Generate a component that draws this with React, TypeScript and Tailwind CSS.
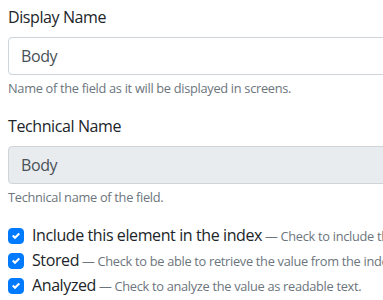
import React from "react";

const CheckIcon = () => (
    <svg viewBox="0 0 8 8" className="w-2 h-2" fill="#fff">
        <path d="M6.564.75l-3.59 3.612-1.538-1.55L0 4.26l2.974 2.99L8 2.193z" />
    </svg>
);

function CheckRow({ label, help }: { label: string; help: string }) {
    return (
        <label className="flex items-start min-h-6 whitespace-nowrap">
            <span className="mt-[5px] w-4 h-4 shrink-0 rounded bg-[#007bff] border border-[#007bff] flex items-center justify-center">
                <CheckIcon />
            </span>
            <span className="ml-2 text-base leading-6 text-[#212529] tracking-[-0.4px]">
                {label}
                <span className="text-[12.8px] text-[#6c757d] tracking-[-0.3px]"> — {help}</span>
            </span>
        </label>
    );
}

export default function App() {
    return (
        <div className="w-[383px] h-[300px] overflow-hidden bg-white" style={{ fontFamily: '"Open Sans", sans-serif' }}>
            <div className="w-[440px] pl-2 pt-[5px]">
                <div className="mb-4">
                    <div className="text-base leading-6 text-[#212529] mb-2 tracking-[-0.4px]">Display Name</div>
                    <div className="h-[38px] border border-[#ced4da] rounded px-3 flex items-center text-base text-[#495057] bg-white tracking-[-0.4px]">Body</div>
                    <div className="mt-1 text-[12.8px] leading-[19px] text-[#6c757d] tracking-[-0.3px]">Name of the field as it will be displayed in screens.</div>
                </div>
                <div className="mb-4">
                    <div className="text-base leading-6 text-[#212529] mb-2 tracking-[-0.4px]">Technical Name</div>
                    <div className="h-[38px] border border-[#ced4da] rounded px-3 flex items-center text-base text-[#495057] bg-[#e9ecef] tracking-[-0.4px]">Body</div>
                    <div className="mt-1 text-[12.8px] leading-[19px] text-[#6c757d] tracking-[-0.3px]">Technical name of the field.</div>
                </div>
                <div className="flex flex-col">
                    <CheckRow label="Include this element in the index" help="Check to include this element in the search index." />
                    <CheckRow label="Stored" help="Check to be able to retrieve the value from the index." />
                    <CheckRow label="Analyzed" help="Check to analyze the value as readable text." />
                </div>
            </div>
        </div>
    );
}
